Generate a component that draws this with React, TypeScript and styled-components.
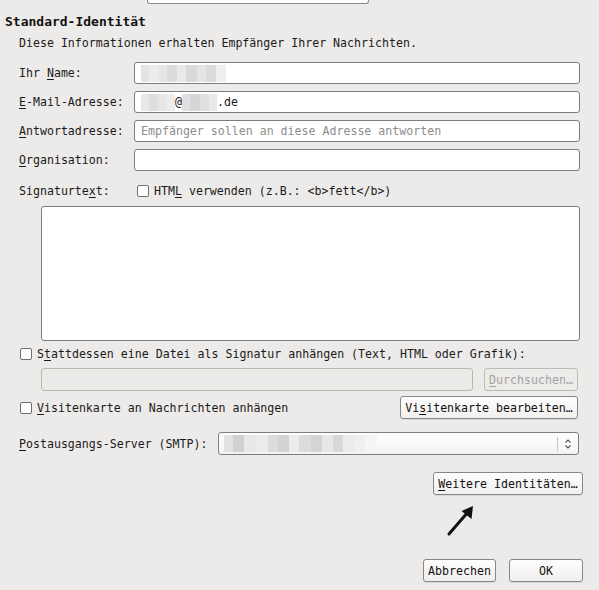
import React from "react";
import styled, { createGlobalStyle } from "styled-components";

const Global = createGlobalStyle`
  html, body {
    margin: 0;
    padding: 0;
    background: #edebe9;
  }
  body {
    font-family: "DejaVu Sans Mono", "Liberation Mono", monospace;
    font-size: 11.6px;
    color: #1a1a1a;
  }
`;

const Page = styled.div`
  width: 599px;
  height: 590px;
  overflow: hidden;
  display: flex;
  flex-direction: column;
  box-sizing: border-box;
`;

const FieldStub = styled.div`
  margin-left: 147px;
  width: 222px;
  height: 4px;
  box-sizing: border-box;
  border: 1px solid #8a8a8a;
  border-top: none;
  border-radius: 0 0 3px 3px;
  background: #fff;
`;

const Heading = styled.div`
  margin-top: 10px;
  padding-left: 5px;
  font-weight: bold;
  font-size: 13px;
  line-height: 16px;
  height: 16px;
  color: #111;
`;

const Description = styled.div`
  margin-top: 5px;
  padding-left: 19px;
  line-height: 16px;
  height: 16px;
`;

const FormGrid = styled.div`
  margin-top: 11px;
  padding-left: 19px;
  display: grid;
  grid-template-columns: 115px 446px;
  grid-auto-rows: 22px;
  row-gap: 7px;
  align-items: center;
`;

const Label = styled.label`
  line-height: 16px;
  white-space: nowrap;
`;

const Key = styled.span`
  text-decoration: underline;
  text-underline-offset: 2px;
`;

const TextBox = styled.div<{ $disabled?: boolean }>`
  height: 22px;
  box-sizing: border-box;
  border: 1px solid ${(p) => (p.$disabled ? "#b9b7b4" : "#7d7d7d")};
  border-radius: 3px;
  background: ${(p) => (p.$disabled ? "#ebeae8" : "#fff")};
  display: flex;
  align-items: center;
  padding-left: 6px;
  overflow: hidden;
  white-space: nowrap;
`;

const Placeholder = styled.span`
  color: #8d8d8d;
`;

const Censor = styled.span<{ $w: number; $c: string }>`
  display: inline-block;
  width: ${(p) => p.$w}px;
  height: 17px;
  background: ${(p) => p.$c};
  flex-shrink: 0;
`;

const SignatureRow = styled.div`
  margin-top: 9px;
  padding-left: 19px;
  height: 22px;
  display: flex;
  align-items: center;
`;

const SignatureLabel = styled(Label)`
  width: 118px;
`;

const CheckLine = styled.label`
  display: flex;
  align-items: center;
  gap: 5px;
  line-height: 16px;
  white-space: nowrap;
`;

const CheckBox = styled.span`
  width: 12px;
  height: 12px;
  box-sizing: border-box;
  border: 1px solid #6f6f6f;
  border-radius: 2px;
  background: #fff;
  flex-shrink: 0;
`;

const TextArea = styled.div`
  margin-top: 4px;
  margin-left: 41px;
  width: 539px;
  height: 135px;
  box-sizing: border-box;
  border: 1px solid #7d7d7d;
  border-radius: 3px;
  background: #fff;
`;

const OptionRow = styled.div`
  margin-top: 2px;
  padding-left: 20px;
  height: 22px;
  display: flex;
  align-items: center;
`;

const FileRow = styled.div`
  margin-top: 3px;
  padding-left: 41px;
  height: 23px;
  display: flex;
  align-items: center;
  gap: 11px;
`;

const FileBox = styled(TextBox)`
  width: 432px;
  height: 23px;
`;

const CardRow = styled.div`
  margin-top: 5px;
  padding-left: 20px;
  width: 578px;
  box-sizing: border-box;
  height: 23px;
  display: flex;
  align-items: center;
  justify-content: space-between;
`;

const Button = styled.button<{ $w: number; $disabled?: boolean }>`
  width: ${(p) => p.$w}px;
  height: 23px;
  box-sizing: border-box;
  padding: 0;
  font: inherit;
  color: ${(p) => (p.$disabled ? "#a3a3a3" : "#111")};
  border: 1px solid ${(p) => (p.$disabled ? "#bdbbb8" : "#878787")};
  border-radius: 3px;
  background: ${(p) =>
    p.$disabled ? "#edebe9" : "linear-gradient(#fdfdfd, #f1f0ef)"};
  box-shadow: ${(p) => (p.$disabled ? "none" : "0 1px 0 rgba(0,0,0,0.08)")};
  display: flex;
  align-items: center;
  justify-content: center;
  white-space: nowrap;
  flex-shrink: 0;
`;

const ServerRow = styled.div`
  margin-top: 13px;
  padding-left: 19px;
  height: 23px;
  display: flex;
  align-items: center;
  gap: 11px;
`;

const Combo = styled.div`
  width: 361px;
  height: 23px;
  box-sizing: border-box;
  border: 1px solid #7d7d7d;
  border-radius: 3px;
  background: linear-gradient(#ffffff, #f4f3f2);
  display: flex;
  align-items: center;
  padding-left: 5px;
`;

const ComboValue = styled.div`
  flex: 1;
  display: flex;
  align-items: center;
  height: 17px;
  overflow: hidden;
`;

const ComboDivider = styled.span`
  width: 1px;
  height: 14px;
  background: #c6c4c1;
`;

const ComboArrows = styled.span`
  width: 20px;
  display: flex;
  justify-content: center;
  align-items: center;
`;

const RightRow = styled.div<{ $top: number }>`
  margin-top: ${(p) => p.$top}px;
  padding-right: 16px;
  display: flex;
  justify-content: flex-end;
  gap: 13px;
`;

const PointerArea = styled.div`
  height: 64px;
  padding-left: 446px;
  display: flex;
  align-items: flex-start;
  padding-top: 9px;
  box-sizing: border-box;
`;

const nameBlocks: [number, string][] = [
  [8, "#e3e3e3"],
  [10, "#ececec"],
  [8, "#e6e6e6"],
  [10, "#dcdcdc"],
  [9, "#e9e9e9"],
  [11, "#d9d9d9"],
  [9, "#e5e5e5"],
  [10, "#dadbdb"],
  [10, "#efefef"],
];

const mailLeft: [number, string][] = [
  [8, "#e8e8e8"],
  [9, "#dedede"],
  [8, "#e6e6e6"],
  [9, "#ececec"],
];

const mailRight: [number, string][] = [
  [8, "#e0e0e0"],
  [10, "#d6d6d6"],
  [9, "#dfdfdf"],
  [8, "#e9e9e9"],
];

const serverBlocks: [number, string][] = [
  [9, "#e2e2e2"],
  [11, "#cfd1d3"],
  [12, "#e8e8e8"],
  [12, "#ececec"],
  [10, "#dcdcdc"],
  [11, "#d2d3d4"],
  [10, "#ececec"],
  [12, "#dcdcdc"],
  [11, "#d4d4d4"],
  [11, "#e6e7e7"],
  [10, "#d8d8d8"],
  [12, "#ececec"],
  [10, "#f0f0f0"],
  [12, "#f5f5f5"],
];

function Blocks({ items }: { items: [number, string][] }) {
  return (
    <>
      {items.map(([w, c], i) => (
        <Censor key={i} $w={w} $c={c} />
      ))}
    </>
  );
}

export default function App() {
  return (
    <Page>
      <Global />
      <FieldStub />
      <Heading>Standard-Identität</Heading>
      <Description>
        Diese Informationen erhalten Empfänger Ihrer Nachrichten.
      </Description>

      <FormGrid>
        <Label>
          Ihr <Key>N</Key>ame:
        </Label>
        <TextBox>
          <Blocks items={nameBlocks} />
        </TextBox>

        <Label>
          <Key>E</Key>-Mail-Adresse:
        </Label>
        <TextBox>
          <Blocks items={mailLeft} />
          <span>@</span>
          <Blocks items={mailRight} />
          <span>.de</span>
        </TextBox>

        <Label>
          <Key>A</Key>ntwortadresse:
        </Label>
        <TextBox>
          <Placeholder>Empfänger sollen an diese Adresse antworten</Placeholder>
        </TextBox>

        <Label>
          <Key>O</Key>rganisation:
        </Label>
        <TextBox />
      </FormGrid>

      <SignatureRow>
        <SignatureLabel>
          Signaturte<Key>x</Key>t:
        </SignatureLabel>
        <CheckLine>
          <CheckBox />
          <span>
            HTM<Key>L</Key> verwenden (z.B.: &lt;b&gt;fett&lt;/b&gt;)
          </span>
        </CheckLine>
      </SignatureRow>

      <TextArea />

      <OptionRow>
        <CheckLine>
          <CheckBox />
          <span>
            S<Key>t</Key>attdessen eine Datei als Signatur anhängen (Text, HTML
            oder Grafik):
          </span>
        </CheckLine>
      </OptionRow>

      <FileRow>
        <FileBox $disabled />
        <Button $w={94} $disabled>
          <span>
            <Key>D</Key>urchsuchen…
          </span>
        </Button>
      </FileRow>

      <CardRow>
        <CheckLine>
          <CheckBox />
          <span>
            <Key>V</Key>isitenkarte an Nachrichten anhängen
          </span>
        </CheckLine>
        <Button $w={178}>
          <span>
            Vi<Key>s</Key>itenkarte bearbeiten…
          </span>
        </Button>
      </CardRow>

      <ServerRow>
        <Label>
          <Key>P</Key>ostausgangs-Server (SMTP):
        </Label>
        <Combo>
          <ComboValue>
            <Blocks items={serverBlocks} />
          </ComboValue>
          <ComboDivider />
          <ComboArrows>
            <svg width="8" height="12" viewBox="0 0 8 12">
              <path
                d="M1.5 4.5 L4 2 L6.5 4.5 M1.5 7.5 L4 10 L6.5 7.5"
                fill="none"
                stroke="#555"
                strokeWidth="1.1"
              />
            </svg>
          </ComboArrows>
        </Combo>
      </ServerRow>

      <RightRow $top={17}>
        <Button $w={150}>
          <span>
            <Key>W</Key>eitere Identitäten…
          </span>
        </Button>
      </RightRow>

      <PointerArea>
        <svg width="32" height="34" viewBox="0 0 32 34">
          <line
            x1="3"
            y1="30"
            x2="22"
            y2="8"
            stroke="#111"
            strokeWidth="3"
            strokeLinecap="round"
          />
          <polygon points="27,2 25.5,15 15.5,7" fill="#111" />
        </svg>
      </PointerArea>

      <RightRow $top={0}>
        <Button $w={73}>Abbrechen</Button>
        <Button $w={74}>OK</Button>
      </RightRow>
    </Page>
  );
}
